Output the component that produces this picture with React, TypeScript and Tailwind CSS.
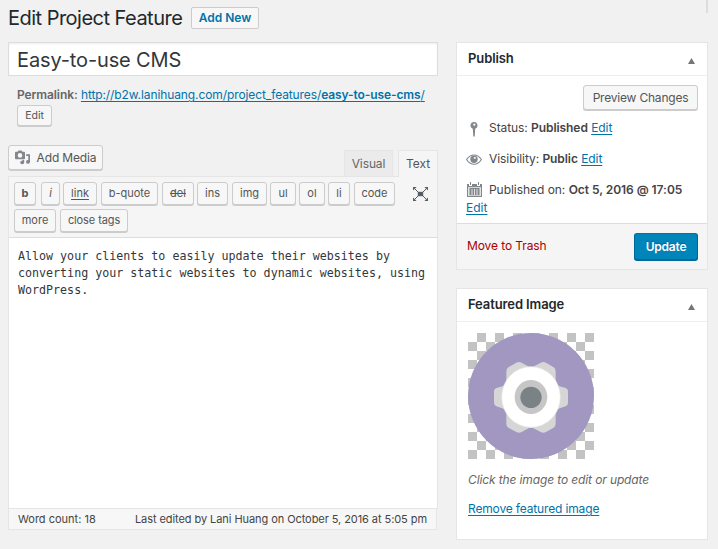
import React from "react";

const link = "text-[#0073aa] underline underline-offset-2 decoration-1";
const raised =
  "border border-[#ccc] rounded-[3px] bg-[#f7f7f7] shadow-[0_1px_0_#ccc] text-[#555] whitespace-nowrap flex items-center justify-center";

function TagButton({ label, className }: { label: string; className: string }) {
  return (
    <button className={`${raised} h-[23px] text-[11px] leading-none shrink-0 text-[#444] ${className}`}>{label}</button>
  );
}

function MediaIcon() {
  return (
    <svg className="block shrink-0" width="16" height="15" viewBox="0 0 16 15" fill="#82878c">
      <path
        fillRule="evenodd"
        d="M1 1.8h1.6L3.4.4h3.2l.8 1.4H9a1 1 0 0 1 1 1v5.4a1 1 0 0 1-1 1H1a1 1 0 0 1-1-1V2.800a1 1 0 0 1 1-1zM5 3.100a2.300 2.300 0 1 0 0 4.600a2.300 2.300 0 0 0 0-4.600z"
      />
      <path d="M11.200 4.200H15v7.700a2 1.800 0 1 1-1.700-1.800V6h-2.100zM7.400 10.100l1.800-.3v2.700a2 1.800 0 1 1-1.800-1.800z" />
    </svg>
  );
}

function PinIcon() {
  return (
    <svg className="block" width="8" height="15" viewBox="0 0 8 15" fill="#82878c">
      <path fillRule="evenodd" d="M4 0a3.500 3.500 0 0 1 1.200 6.800L4.700 14.500H3.300L2.800 6.800A3.500 3.500 0 0 1 4 0zM4.300 1.600a1.100 1.100 0 1 0 .1 2.200a1.100 1.100 0 0 0-.1-2.200z" />
    </svg>
  );
}

function EyeIcon() {
  return (
    <svg className="block" width="16" height="11" viewBox="0 0 16 11">
      <path d="M.600 5.500Q3.500 1 8 1t7.400 4.500Q12.500 10.200 8 10.200T.600 5.500z" fill="#fff" stroke="#82878c" strokeWidth="1.100" />
      <circle cx="8" cy="5.200" r="3.700" fill="#82878c" />
      <circle cx="8.800" cy="3.900" r="1.100" fill="#e8e9ea" />
    </svg>
  );
}

function CalendarIcon() {
  return (
    <svg className="block" width="15" height="15" viewBox="0 0 15 15">
      <path d="M0 2h15v13H0z" fill="#82878c" />
      <path d="M1 5h13v1H1z" fill="#d5d7d9" />
      <path d="M2 1h3v3H2zM10 1h3v3h-3z" fill="#fff" />
      <path d="M3 0h1v3H3zM11 0h1v3h-1z" fill="#82878c" />
      <path d="M1 6h1.500v8H1zM4.500 7h1v6h-1zM7 7h1v6H7zM9.500 7h1v6h-1zM12.500 6H14v8h-1.500zM1 13.200h13v.8H1z" fill="#e3e4e5" />
    </svg>
  );
}

function ExpandIcon() {
  return (
    <svg className="block" width="15" height="14" viewBox="0 0 15 14" fill="#555d66">
      <path d="M0 0h3.600L0 3.600zM15 0v3.600L11.400 0zM0 14v-3.600L3.600 14zM15 14h-3.600l3.600-3.600z" />
      <path d="M2 2l3 3M13 2l-3 3M2 12l3-3M13 12l-3-3" stroke="#555d66" strokeWidth="1" />
      <path d="M4.800 4.800h5.400v4.400H4.800z" />
    </svg>
  );
}

const checks = Array.from({ length: 14 }, (_, r) =>
  Array.from({ length: 14 }, (_, c) => ({ r, c })).filter((p) => (p.r + p.c) % 2 === 1),
).flat();

function GearImage() {
  return (
    <svg className="block" width="126" height="126" viewBox="39 24 378 378">
      {checks.map(({ r, c }) => (
        <rect key={`${r}-${c}`} x={39 + c * 27} y={24 + r * 27} width="27" height="27" fill="#c3c3c3" shapeRendering="crispEdges" />
      ))}
      <circle cx="228" cy="213" r="189" fill="#a297c0" />
      <path
        d="M154 140Q154 131 160 127L184 113Q192 109 200 113L222 125H234L257 113Q265 109 273 113L296 127Q302 131 302 140V174Q302 180 308 182L332 189Q339 191 339 199V233Q339 241 332 244L308 252Q302 254 302 261V296Q302 305 296 308L273 321Q265 325 257 321L234 309H222L200 321Q192 325 184 321L160 308Q154 305 154 296V261Q154 254 148 252L124 244Q117 241 117 233V199Q117 191 124 189L148 182Q154 180 154 174Z"
        fill="#d6d6d6"
      />
      <ellipse cx="228" cy="216" rx="88" ry="91" fill="#fff" stroke="#e5e5e5" strokeWidth="2" />
      <ellipse cx="228" cy="216" rx="49" ry="51" fill="#c6c6c6" />
      <circle cx="228" cy="217" r="32" fill="#7a8285" />
    </svg>
  );
}

function PanelHeader({ title }: { title: string }) {
  return (
    <header className="flex h-[33px] items-center justify-between border-b border-[#eee] pl-[11px] pr-3">
      <h2 className="pb-[2px] text-[13px] font-semibold leading-none tracking-[-0.1px] text-[#23282d]">{title}</h2>
      <svg className="mt-1 block" width="7" height="6" viewBox="0 0 7 6">
        <path d="M3.500 0 7 6H0z" fill="#72777c" />
      </svg>
    </header>
  );
}

export default function App() {
  return (
    <div className="flex h-[549px] w-[718px] overflow-hidden bg-[#f1f1f1] pl-2 font-[Inter,sans-serif] text-[12px] text-[#444]">
      <main className="w-[430px] shrink-0">
        <div className="flex h-[42px] pt-[7px]">
          <h1 className="w-[183px] whitespace-nowrap text-[20px] leading-[23px] tracking-[-0.52px] text-[#23282d]">Edit Project Feature</h1>
          <a className="flex h-[22px] w-[68px] items-center justify-center rounded-[2px] border border-[#ccc] bg-[#f7f7f7] text-[12px] font-semibold text-[#0073aa]">
            Add New
          </a>
        </div>
        <div className="flex h-[34px] items-center border border-[#ddd] bg-white pl-2 pt-[2px] text-[20px] leading-none tracking-[-0.13px] text-[#32373c] shadow-[inset_0_1px_2px_rgba(0,0,0,0.07)]">
          Easy-to-use CMS
        </div>
        <div className="h-[29px] whitespace-nowrap pl-[9px] pt-[11px] text-[12px] leading-4 tracking-[-0.1px]">
          <b className="font-semibold text-[#666]">Permalink:</b>{" "}
          <a className={link}>
            http://b2w.lanihuang.com/project_features/<b className="font-semibold">easy-to-use-cms</b>/
          </a>
        </div>
        <div className="flex h-10 pl-[9px]">
          <button className={`${raised} h-[21px] w-[35px] text-[10.500px]`}>Edit</button>
        </div>
        <div className="flex h-[31px] justify-between">
          <button className={`${raised} h-[25px] w-[95px] gap-[6px] text-[12px] tracking-[-0.15px]`}>
            <MediaIcon />
            Add Media
          </button>
          <div className="z-10 flex h-8 gap-[5px] pt-[5px]">
            <div className="flex h-[26px] w-[49px] items-center justify-center border border-b-0 border-[#e5e5e5] bg-[#ebebeb] text-[12px] tracking-[-0.1px] text-[#666]">Visual</div>
            <div className="flex h-[27px] w-10 items-center justify-center border border-b-0 border-[#e5e5e5] bg-[#f5f5f5] text-[12px] text-[#555]">Text</div>
          </div>
        </div>
        <section className="h-[333px] border-x border-t border-[#e5e5e5] bg-white">
          <div className="h-[61px] border-b border-[#ddd] bg-[#f5f5f5] pl-[5px] pt-[5px]">
            <div className="flex h-[27px]">
              <TagButton label="b" className="w-[22px] font-bold" />
              <TagButton label="i" className="ml-[5px] w-[19px] italic" />
              <TagButton label="link" className="ml-[3px] w-[34px] underline underline-offset-2" />
              <TagButton label="b-quote" className="ml-1 w-[57px]" />
              <TagButton label="del" className="ml-1 w-8 line-through" />
              <TagButton label="ins" className="ml-[3px] w-[31px]" />
              <TagButton label="img" className="ml-1 w-[35px]" />
              <TagButton label="ul" className="ml-[3px] w-[26px]" />
              <TagButton label="ol" className="ml-[3px] w-[26px]" />
              <TagButton label="li" className="ml-[3px] w-[22px]" />
              <TagButton label="code" className="ml-1 w-[41px]" />
              <span className="ml-[18px] mt-[5px]">
                <ExpandIcon />
              </span>
            </div>
            <div className="flex gap-1">
              <TagButton label="more" className="w-[42px]" />
              <TagButton label="close tags" className="w-[68px] tracking-[-0.1px]" />
            </div>
          </div>
          <div className="whitespace-nowrap pl-[9px] pt-[10px] font-['DejaVu_Sans_Mono',monospace] text-[11.670px] leading-[17px] text-[#32373c]">
            Allow your clients to easily update their websites by
            <br />
            converting your static websites to dynamic websites, using
            <br />
            WordPress.
          </div>
        </section>
        <footer className="-mt-px flex h-[22px] w-[429px] items-center justify-between whitespace-nowrap border border-[#e5e5e5] bg-[#f7f7f7] pl-[9px] pr-[9px] text-[11px] leading-none">
          <span>Word count: 18</span>
          <span className="tracking-[-0.07px]">Last edited by Lani Huang on October 5, 2016 at 5:05 pm</span>
        </footer>
      </main>

      <aside className="ml-[18px] w-[252px] shrink-0">
        <div className="flex h-[42px] justify-end">
          <div className="h-[13px] w-[2px] bg-[#ddd]" />
        </div>
        <section className="h-[228px] border border-[#e5e5e5] bg-white">
          <PanelHeader title="Publish" />
          <div className="h-[147px] pl-[9px] pr-[9px] pt-[9px]">
            <div className="flex h-[34px] justify-end">
              <button className={`${raised} h-[25px] w-[115px] text-[12px] tracking-[-0.2px]`}>Preview Changes</button>
            </div>
            <div className="flex h-[31px] whitespace-nowrap leading-4 tracking-[-0.07px]">
              <span className="w-[23px] pl-1 pt-[3px]"><PinIcon /></span>
              <span className="pt-px">Status: <b className="font-semibold">Published</b> <a className={link}>Edit</a></span>
            </div>
            <div className="flex h-[31px] whitespace-nowrap leading-4 tracking-[-0.07px]">
              <span className="w-[23px] pt-[4px]"><EyeIcon /></span>
              <span className="pt-px">Visibility: <b className="font-semibold">Public</b> <a className={link}>Edit</a></span>
            </div>
            <div className="flex h-[19px] whitespace-nowrap leading-4 tracking-[-0.04px]">
              <span className="w-[23px] pl-px pt-px"><CalendarIcon /></span>
              <span className="pt-px">Published on: <b className="font-semibold">Oct 5, 2016 @ 17:05</b></span>
            </div>
            <a className={`${link} block leading-4`}>Edit</a>
          </div>
          <div className="flex h-[46px] justify-between border-t border-[#ddd] bg-[#f5f5f5] pl-[10px] pr-[9px] pt-[9px]">
            <a className="pt-[5px] leading-4 tracking-[-0.1px] text-[#a00]">Move to Trash</a>
            <button className="flex h-[27px] w-16 items-center justify-center rounded-[3px] border border-[#006799] border-t-[#0073aa] bg-[#0085ba] text-[12px] font-semibold tracking-[-0.2px] text-white shadow-[0_1px_0_#006799] [text-shadow:0_-1px_1px_#006799]">
              Update
            </button>
          </div>
        </section>
        <section className="mt-[18px] h-[252px] border border-[#e5e5e5] bg-white">
          <PanelHeader title="Featured Image" />
          <div className="whitespace-nowrap pl-[11px] pt-[11px] leading-4">
            <GearImage />
            <p className="mt-[13px] italic tracking-[-0.12px] text-[#666]">Click the image to edit or update</p>
            <a className={`${link} mt-[13px] block tracking-[-0.15px]`}>Remove featured image</a>
          </div>
        </section>
      </aside>
    </div>
  );
}
